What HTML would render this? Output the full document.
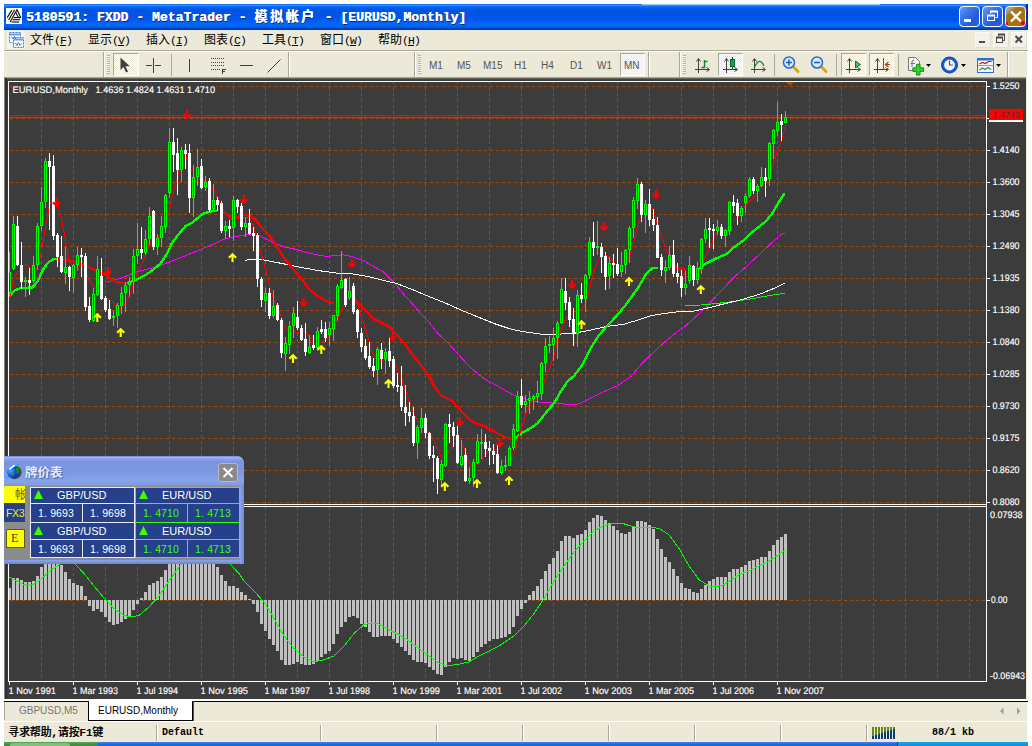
<!DOCTYPE html>
<html lang="zh-CN"><head><meta charset="utf-8"><title>5180591: FXDD - MetaTrader</title>
<style>
html,body{margin:0;padding:0;background:#fff;}
body{width:1032px;height:746px;position:relative;overflow:hidden;font-family:"Liberation Sans","Noto Sans CJK SC",sans-serif;font-size:12px;color:#000;}
div,span{position:absolute;box-sizing:border-box;}
#win{left:4px;top:4px;width:1023px;height:738px;background:#ece9d8;}
#title{left:4px;top:4px;width:1024px;height:26px;background:linear-gradient(to bottom,#0058ee 0%,#3593ff 4%,#288eff 6%,#127dff 8%,#036ffc 10%,#0262ee 14%,#0057e5 20%,#0054e3 24%,#0055eb 56%,#005bf5 66%,#026afe 76%,#0062ef 86%,#0052d6 92%,#0040ab 97%,#003092 100%);}
#title .hl{left:638px;top:0;width:238px;height:1px;background:#9cc3e8;}
#ticon{left:6px;top:8px;width:16px;height:16px;background:#fff;}
#ttext{left:26px;top:9.5px;transform:scaleY(1.02);height:16px;line-height:16px;white-space:pre;color:#fff;font-family:"Liberation Mono","Noto Sans CJK SC",monospace;font-weight:bold;font-size:13px;text-shadow:0.4px 0 0 #fff,1px 1px 0 #0a2a7a;letter-spacing:0.07px;transform-origin:0 50%;}
#ttext .cj{position:static;letter-spacing:2.6px;}
.tbtn{top:6px;width:21px;height:21px;border:1px solid #fff;border-radius:4px;background:linear-gradient(135deg,#6a9cf6 0,#3a74ea 35%,#2458d8 70%,#2a60e0 100%);}
.mi{top:33px;height:16px;line-height:16px;font-size:12px;white-space:pre;font-family:"Liberation Mono","Noto Sans CJK SC",monospace;}
.mi b{position:static;font-weight:normal;font-size:11.5px;letter-spacing:-0.9px;font-family:"Liberation Mono",monospace;}
.mi u{text-decoration:underline;}
.sepd{width:1px;background:#aca899;}
.sepl{width:1px;background:#fff;}
.grip{width:3px;height:19px;top:55px;background:repeating-linear-gradient(to bottom,#b5b2a3 0,#b5b2a3 1px,#f8f7f0 1px,#f8f7f0 2px);}
.sel{top:53px;height:23px;border:1px solid;border-color:#aca899 #fff #fff #aca899;background:repeating-conic-gradient(#ffffff 0% 25%,#ece9d8 0% 50%) 0 0/2px 2px;}
.tf{top:60px;font-size:10px;line-height:12px;height:12px;color:#555;font-family:"Liberation Sans",sans-serif;white-space:pre;}
.st{top:726px;font-size:12px;line-height:14px;height:14px;white-space:pre;font-family:"Liberation Mono","Noto Sans CJK SC",monospace;font-weight:bold;}
svg{position:absolute;overflow:visible;}
.qc{background:#26408b;border:1px solid;}
.wb{border-color:#e6eaff;}
.gb{border-color:#40ff00;}
.qh{font-size:11px;line-height:12px;height:12px;color:#fff;white-space:pre;font-family:"Liberation Sans",sans-serif;}
.qp{font-size:10.5px;line-height:12px;height:12px;color:#fff;white-space:pre;font-family:"Liberation Sans",sans-serif;letter-spacing:0.16px;}
.qp i{font-style:normal;position:static;letter-spacing:3.2px;}
.qp.g{color:#40ff00;}
.mdi{top:32px;width:16px;height:16px;background:#f3f2e9;border:1px solid;border-color:#faf9f3 #e2dfd0 #e2dfd0 #faf9f3;}
.mdi svg{left:-1px !important;top:-1px !important;}

</style></head>
<body>
<div id="win"></div>
<div id="title"><div class="hl"></div></div>
<div id="ticon"><svg width="16" height="16" viewBox="0 0 16 16" style="left:0;top:0"><g stroke="#111" stroke-width="1.15" fill="none"><path d="M1.200 9.600 L5.800 2.100"/><path d="M2.600 12 L8.700 1.800"/><path d="M4.100 14 L11 1.800 L14.500 9"/><path d="M9.600 4.200 L12.300 9.300"/><path d="M7.600 9.600 H15.100"/><path d="M6.700 11.700 H14.300"/><path d="M5.500 14 H13.100"/></g></svg></div>
<div id="ttext">5180591: FXDD - MetaTrader - <span class="cj">模拟帐户</span> - [EURUSD,Monthly]</div>
<div class="tbtn" style="left:959px"><svg width="19" height="19" style="left:0;top:0"><rect x="4" y="12" width="7" height="3" fill="#fff"/></svg></div>
<div class="tbtn" style="left:982px"><svg width="19" height="19" style="left:0;top:0"><g fill="none" stroke="#fff"><path d="M7.500 6.500 V4.500 H14.500 V10.500 H12.500" stroke-width="1"/><path d="M7 4.500 H15" stroke-width="2"/><rect x="4.500" y="8.500" width="7" height="5"/><path d="M4 8.500 H12" stroke-width="2"/></g></svg></div>
<div class="tbtn" style="left:1005px;background:linear-gradient(135deg,#a0a0a0 0,#a0a0a0 14%,#a8740e 30%,#a6700c 100%)"><svg width="19" height="19" style="left:0;top:0"><path d="M5 4.500 L15 14.500 M15 4.500 L5 14.500" stroke="#fff" stroke-width="2.300" fill="none"/><rect x="15" y="14" width="4" height="4" rx="1.500" fill="#f00"/><rect x="0" y="15" width="2" height="3" fill="#f00"/></svg></div>
<div style="left:1026px;top:4px;width:2px;height:26px;background:linear-gradient(to right,#0a34c4,#0a1e9e)"></div>

<!-- menu bar -->
<svg width="18" height="18" style="left:7px;top:31px" viewBox="0 0 18 18"><rect x="0" y="0" width="18" height="18" fill="#f5f4ec"/><g fill="#fff" stroke="#3f78d8" stroke-width="1"><rect x="2.500" y="1.500" width="11" height="10" stroke-dasharray="2 1"/><rect x="6.500" y="6.500" width="10" height="10" stroke-dasharray="2 1"/></g><path d="M3 3.500 H13" stroke="#6a9ae8" stroke-width="2"/><path d="M7 8.500 H16" stroke="#6a9ae8" stroke-width="2"/><path d="M4.500 6 l1.500 2 l1.500 -2.500 l1.500 2.500" stroke="#3f78d8" fill="none" stroke-width="1"/><path d="M8.500 12 l1.500 2.500 l1.500 -3 l1.500 3 l1.500 -2" stroke="#3f78d8" fill="none" stroke-width="1"/></svg>
<div class="mi" style="left:30px">文件<b>(<u>F</u>)</b></div>
<div class="mi" style="left:88px">显示<b>(<u>V</u>)</b></div>
<div class="mi" style="left:146px">插入<b>(<u>I</u>)</b></div>
<div class="mi" style="left:204px">图表<b>(<u>C</u>)</b></div>
<div class="mi" style="left:262px">工具<b>(<u>T</u>)</b></div>
<div class="mi" style="left:320px">窗口<b>(<u>W</u>)</b></div>
<div class="mi" style="left:378px">帮助<b>(<u>H</u>)</b></div>
<!-- mdi buttons -->
<div class="mdi" style="left:975px"><svg width="16" height="16" style="left:0;top:0"><rect x="4" y="9" width="6" height="2" fill="#4a4a4a"/></svg></div>
<div class="mdi" style="left:993px"><svg width="16" height="16" style="left:0;top:0"><g fill="none" stroke="#4a4a4a"><path d="M5.500 4.500 V2.500 H11.500 V8.500 H9.500"/><path d="M5 2.500 H12" stroke-width="2"/><rect x="3.500" y="5.500" width="6" height="5"/><path d="M3 5.500 H10" stroke-width="2"/></g></svg></div>
<div class="mdi" style="left:1011px"><svg width="16" height="16" style="left:0;top:0"><path d="M4.500 4 L11 10.500 M11 4 L4.500 10.500" stroke="#4a4a4a" stroke-width="2" fill="none"/></svg></div>
<div style="left:4px;top:50px;width:1024px;height:1px;background:#aca899"></div>
<div style="left:4px;top:51px;width:1024px;height:1px;background:#fff"></div>

<!-- toolbar 1: line studies -->
<div class="sepd" style="left:103px;top:52px;height:25px"></div><div class="sepl" style="left:104px;top:52px;height:25px"></div>
<div class="grip" style="left:107px"></div>
<div class="sel" style="left:113px;width:26px"></div>
<svg width="190" height="26" style="left:100px;top:51px">
<path d="M20.5 6.5 L20.5 19 L23.5 16 L26 21.5 L28 20.5 L25.5 15.3 L29.8 15.3 Z" fill="#404040"/>
<g stroke="#404040" stroke-width="1" fill="none">
<path d="M53.5 7 V22 M46 14.5 H52 M55 14.5 H61"/>
<path d="M89.5 8 V21"/>
<path d="M111 7.5 H124 M111 11.5 H124 M111 14.5 H124 M111 18.5 H120" stroke-dasharray="1 1"/>
<path d="M140 14.5 H153"/>
<path d="M167.5 21.5 L180.5 8.5"/>
</g>
<path d="M122 18 h4 v1 h-3 v1 h2 v1 h-2 v2 h-1 Z" fill="#404040"/>
</svg>
<div class="sepd" style="left:171px;top:54px;height:22px"></div>
<div class="sepd" style="left:288px;top:52px;height:25px"></div><div class="sepl" style="left:289px;top:52px;height:25px"></div>

<!-- toolbar 2: timeframes -->
<div class="sepd" style="left:414px;top:52px;height:25px"></div><div class="sepl" style="left:415px;top:52px;height:25px"></div>
<div class="grip" style="left:418px"></div>
<div class="tf" style="left:429px">M1</div>
<div class="tf" style="left:457px">M5</div>
<div class="tf" style="left:483px">M15</div>
<div class="tf" style="left:514px">H1</div>
<div class="tf" style="left:541px">H4</div>
<div class="tf" style="left:570px">D1</div>
<div class="tf" style="left:597px">W1</div>
<div class="sel" style="left:620px;width:25px"></div>
<div class="tf" style="left:624px">MN</div>
<div class="sepd" style="left:648px;top:52px;height:25px"></div><div class="sepl" style="left:649px;top:52px;height:25px"></div>

<!-- toolbar 3: charts -->
<div class="sepd" style="left:679px;top:52px;height:25px"></div><div class="sepl" style="left:680px;top:52px;height:25px"></div>
<div class="grip" style="left:683px"></div>
<div class="sel" style="left:718px;width:25px"></div>
<div class="sel" style="left:841px;width:25px"></div>
<div class="sel" style="left:869px;width:25px"></div>
<svg width="340" height="26" style="left:676px;top:51px">
<defs>
<g id="axes" stroke="#404040" stroke-width="1" fill="none"><path d="M3.5 1 V15 M0 11.500 H14"/><path d="M1.5 3.500 L3.500 0.500 L5.500 3.500 M11.500 9.500 L14.500 11.500 L11.500 13.500"/></g>
</defs>
<!-- bar chart -->
<use href="#axes" x="19" y="7"/>
<path d="M28.500 9 V17 M25.500 16.500 H28.500 M28.500 10.500 H31.500" stroke="#0a8a2a" stroke-width="1.400" fill="none"/>
<!-- candle -->
<use href="#axes" x="47" y="7"/>
<path d="M56.500 6 V18" stroke="#063" stroke-width="1"/><rect x="54.500" y="8.500" width="4" height="7" fill="#1aa34a" stroke="#063"/>
<!-- line -->
<use href="#axes" x="75" y="7"/>
<path d="M78 17 C82 9 85 8 88 15" stroke="#0a8a2a" stroke-width="1.300" fill="none"/>
<!-- zoom in -->
<g>
<path d="M117 15.500 L122 20.500" stroke="#d8a818" stroke-width="3" stroke-linecap="round"/>
<circle cx="113" cy="11.500" r="5.500" fill="#d9e8fb" stroke="#2f6fd0" stroke-width="1.600"/>
<path d="M110 11.500 H116 M113 8.500 V14.500" stroke="#1f5fc0" stroke-width="1.600"/>
</g>
<!-- zoom out -->
<g>
<path d="M145 15.500 L150 20.500" stroke="#d8a818" stroke-width="3" stroke-linecap="round"/>
<circle cx="141" cy="11.500" r="5.500" fill="#d9e8fb" stroke="#2f6fd0" stroke-width="1.600"/>
<path d="M138 11.500 H144" stroke="#1f5fc0" stroke-width="1.600"/>
</g>
<!-- autoscroll -->
<use href="#axes" x="170" y="7"/>
<path d="M179.500 10 L184.500 13.500 L179.500 17 Z" fill="#4dbb5a" stroke="#0a7a2a" stroke-width="1"/>
<!-- chart shift -->
<use href="#axes" x="198" y="7"/>
<path d="M207.500 7 V18" stroke="#1f5fc0" stroke-width="1"/><path d="M214 13.500 H210 M212.500 11 L209.500 13.500 L212.500 16" stroke="#a8401a" stroke-width="1.200" fill="none"/>
<!-- indicators -->
<g>
<path d="M232.500 6.500 H239.500 L243.500 10.500 V19.500 H232.500 Z" fill="#f4f4f4" stroke="#777"/>
<path d="M236 16 V11 q0 -2 2 -2 M234.500 12.500 H239" stroke="#777" fill="none"/>
<path d="M240.500 12.500 h4 v4 h4 v4 h-4 v4 h-4 v-4 h-4 v-4 h4 Z" fill="#2fd02f" stroke="#0a8a0a" transform="translate(24 2) scale(0.9)"/>
<path d="M250 13 h5 l-2.500 3 Z" fill="#000"/>
</g>
<!-- clock -->
<g>
<circle cx="273.500" cy="14" r="6.800" fill="#f4f6fa" stroke="#1a5cc8" stroke-width="2.800"/>
<circle cx="273.500" cy="14" r="8" fill="none" stroke="#0c3c9a" stroke-width="0.800"/>
<path d="M273.500 9.500 V14 H277" stroke="#555" stroke-width="1.200" fill="none"/>
<path d="M285 13 h5 l-2.500 3 Z" fill="#000"/>
</g>
<!-- template -->
<g>
<rect x="301.500" y="7.500" width="16" height="14" fill="#f4f4f4" stroke="#2f6fd0"/>
<path d="M301 8.500 H318" stroke="#2f6fd0" stroke-width="2"/>
<path d="M302 14.500 H317" stroke="#7aa0e0" stroke-width="1"/>
<path d="M303.500 13 l3 -1.500 l3 1 l3 -2 l3 0" stroke="#b02a1a" fill="none" stroke-width="1.200"/>
<path d="M303.500 19 l3 -2 l2.500 1.500 l3 -2 l3 2" stroke="#1a9a3a" fill="none" stroke-width="1.200"/>
<path d="M320 13 h5 l-2.500 3 Z" fill="#000"/>
</g>
</svg>
<div class="sepd" style="left:774px;top:54px;height:22px"></div>
<div class="sepd" style="left:836px;top:54px;height:22px"></div>
<div class="sepd" style="left:898px;top:54px;height:22px"></div>
<div class="sepd" style="left:1007px;top:52px;height:25px"></div><div class="sepl" style="left:1008px;top:52px;height:25px"></div>

<svg id="chart" width="1032" height="746" viewBox="0 0 1032 746" style="left:0;top:0" shape-rendering="crispEdges" font-family="Liberation Sans, sans-serif">
<rect x="4" y="77" width="1022" height="622" fill="#3c3c3c"/>
<rect x="4" y="77" width="1022" height="1" fill="#a5a293"/>
<rect x="4" y="78" width="1022" height="1" fill="#68665c"/>
<rect x="4" y="79" width="1022" height="1" fill="#444440"/>
<rect x="4" y="77" width="1" height="622" fill="#8a887d"/>
<rect x="5" y="78" width="2" height="621" fill="#303030"/>
<g stroke="#9a4e12" stroke-width="1" stroke-dasharray="3 3" fill="none">
<path d="M41.5 81 V681"/>
<path d="M73.5 81 V681"/>
<path d="M105.5 81 V681"/>
<path d="M137.5 81 V681"/>
<path d="M169.5 81 V681"/>
<path d="M201.5 81 V681"/>
<path d="M233.5 81 V681"/>
<path d="M265.5 81 V681"/>
<path d="M297.5 81 V681"/>
<path d="M329.5 81 V681"/>
<path d="M361.5 81 V681"/>
<path d="M393.5 81 V681"/>
<path d="M425.5 81 V681"/>
<path d="M457.5 81 V681"/>
<path d="M489.5 81 V681"/>
<path d="M521.5 81 V681"/>
<path d="M553.5 81 V681"/>
<path d="M585.5 81 V681"/>
<path d="M617.5 81 V681"/>
<path d="M649.5 81 V681"/>
<path d="M681.5 81 V681"/>
<path d="M713.5 81 V681"/>
<path d="M745.5 81 V681"/>
<path d="M777.5 81 V681"/>
<path d="M809.5 81 V681"/>
<path d="M841.5 81 V681"/>
<path d="M873.5 81 V681"/>
<path d="M905.5 81 V681"/>
<path d="M937.5 81 V681"/>
<path d="M969.5 81 V681"/>
<path d="M10 86.5 H986"/>
<path d="M10 118.5 H986"/>
<path d="M10 150.5 H986"/>
<path d="M10 182.5 H986"/>
<path d="M10 214.5 H986"/>
<path d="M10 246.5 H986"/>
<path d="M10 278.5 H986"/>
<path d="M10 310.5 H986"/>
<path d="M10 342.5 H986"/>
<path d="M10 374.5 H986"/>
<path d="M10 406.5 H986"/>
<path d="M10 438.5 H986"/>
<path d="M10 470.5 H986"/>
<path d="M10 502.5 H986"/>
<path d="M10 600.5 H986"/>
</g>
<g fill="#fff">
<rect x="8" y="81" width="979" height="1"/>
<rect x="8" y="81" width="1" height="601"/>
<rect x="986" y="81" width="1" height="601"/>
<rect x="8" y="681" width="979" height="1"/>
<rect x="8" y="504" width="979" height="1"/>
<rect x="8" y="506" width="979" height="1"/>
<rect x="9" y="505" width="977" height="1" fill="#3c3c3c"/>
<rect x="987" y="86" width="3" height="1"/>
<rect x="987" y="118" width="3" height="1"/>
<rect x="987" y="150" width="3" height="1"/>
<rect x="987" y="182" width="3" height="1"/>
<rect x="987" y="214" width="3" height="1"/>
<rect x="987" y="246" width="3" height="1"/>
<rect x="987" y="278" width="3" height="1"/>
<rect x="987" y="310" width="3" height="1"/>
<rect x="987" y="342" width="3" height="1"/>
<rect x="987" y="374" width="3" height="1"/>
<rect x="987" y="406" width="3" height="1"/>
<rect x="987" y="438" width="3" height="1"/>
<rect x="987" y="470" width="3" height="1"/>
<rect x="987" y="502" width="3" height="1"/>
<rect x="987" y="600" width="3" height="1"/>
<rect x="9" y="682" width="1" height="3"/>
<rect x="73" y="682" width="1" height="3"/>
<rect x="137" y="682" width="1" height="3"/>
<rect x="201" y="682" width="1" height="3"/>
<rect x="265" y="682" width="1" height="3"/>
<rect x="329" y="682" width="1" height="3"/>
<rect x="393" y="682" width="1" height="3"/>
<rect x="457" y="682" width="1" height="3"/>
<rect x="521" y="682" width="1" height="3"/>
<rect x="585" y="682" width="1" height="3"/>
<rect x="649" y="682" width="1" height="3"/>
<rect x="713" y="682" width="1" height="3"/>
<rect x="777" y="682" width="1" height="3"/>
</g>
<rect x="9" y="117" width="977" height="1" fill="#9a4e12"/>
<rect x="9" y="115" width="977" height="1" fill="#f00"/>
<rect x="9" y="116" width="977" height="1" fill="#f00" opacity="0.25"/>
<g fill="#c0c0c0">
<rect x="9" y="588" width="2" height="12"/>
<rect x="12" y="578" width="3" height="22"/>
<rect x="16" y="578" width="3" height="22"/>
<rect x="20" y="580" width="3" height="20"/>
<rect x="24" y="582" width="3" height="18"/>
<rect x="28" y="582" width="3" height="18"/>
<rect x="32" y="581" width="3" height="19"/>
<rect x="36" y="576" width="3" height="24"/>
<rect x="40" y="567" width="3" height="33"/>
<rect x="44" y="560" width="3" height="40"/>
<rect x="48" y="556" width="3" height="44"/>
<rect x="52" y="555" width="3" height="45"/>
<rect x="56" y="558" width="3" height="42"/>
<rect x="60" y="565" width="3" height="35"/>
<rect x="64" y="572" width="3" height="28"/>
<rect x="68" y="579" width="3" height="21"/>
<rect x="72" y="583" width="3" height="17"/>
<rect x="76" y="585" width="3" height="15"/>
<rect x="80" y="586" width="3" height="14"/>
<rect x="84" y="596" width="3" height="4"/>
<rect x="88" y="600" width="3" height="6"/>
<rect x="92" y="600" width="3" height="11"/>
<rect x="96" y="600" width="3" height="9"/>
<rect x="100" y="600" width="3" height="12"/>
<rect x="104" y="600" width="3" height="17"/>
<rect x="108" y="600" width="3" height="22"/>
<rect x="112" y="600" width="3" height="25"/>
<rect x="116" y="600" width="3" height="24"/>
<rect x="120" y="600" width="3" height="22"/>
<rect x="124" y="600" width="3" height="19"/>
<rect x="128" y="600" width="3" height="16"/>
<rect x="132" y="600" width="3" height="10"/>
<rect x="136" y="600" width="3" height="4"/>
<rect x="140" y="598" width="3" height="2"/>
<rect x="144" y="592" width="3" height="8"/>
<rect x="148" y="585" width="3" height="15"/>
<rect x="152" y="583" width="3" height="17"/>
<rect x="156" y="581" width="3" height="19"/>
<rect x="160" y="577" width="3" height="23"/>
<rect x="164" y="570" width="3" height="30"/>
<rect x="168" y="562" width="3" height="38"/>
<rect x="172" y="555" width="3" height="45"/>
<rect x="176" y="548" width="3" height="52"/>
<rect x="180" y="543" width="3" height="57"/>
<rect x="184" y="540" width="3" height="60"/>
<rect x="188" y="538" width="3" height="62"/>
<rect x="192" y="538" width="3" height="62"/>
<rect x="196" y="540" width="3" height="60"/>
<rect x="200" y="544" width="3" height="56"/>
<rect x="204" y="549" width="3" height="51"/>
<rect x="208" y="555" width="3" height="45"/>
<rect x="212" y="561" width="3" height="39"/>
<rect x="216" y="567" width="3" height="33"/>
<rect x="220" y="575" width="3" height="25"/>
<rect x="224" y="581" width="3" height="19"/>
<rect x="228" y="586" width="3" height="14"/>
<rect x="232" y="586" width="3" height="14"/>
<rect x="236" y="588" width="3" height="12"/>
<rect x="240" y="592" width="3" height="8"/>
<rect x="244" y="595" width="3" height="5"/>
<rect x="248" y="599" width="3" height="1"/>
<rect x="252" y="600" width="3" height="4"/>
<rect x="256" y="600" width="3" height="12"/>
<rect x="260" y="600" width="3" height="24"/>
<rect x="264" y="600" width="3" height="31"/>
<rect x="268" y="600" width="3" height="39"/>
<rect x="272" y="600" width="3" height="45"/>
<rect x="276" y="600" width="3" height="51"/>
<rect x="280" y="600" width="3" height="60"/>
<rect x="284" y="600" width="3" height="65"/>
<rect x="288" y="600" width="3" height="65"/>
<rect x="292" y="600" width="3" height="64"/>
<rect x="296" y="600" width="3" height="62"/>
<rect x="300" y="600" width="3" height="64"/>
<rect x="304" y="600" width="3" height="65"/>
<rect x="308" y="600" width="3" height="65"/>
<rect x="312" y="600" width="3" height="64"/>
<rect x="316" y="600" width="3" height="61"/>
<rect x="320" y="600" width="3" height="57"/>
<rect x="324" y="600" width="3" height="54"/>
<rect x="328" y="600" width="3" height="51"/>
<rect x="332" y="600" width="3" height="44"/>
<rect x="336" y="600" width="3" height="34"/>
<rect x="340" y="600" width="3" height="27"/>
<rect x="344" y="600" width="3" height="22"/>
<rect x="348" y="600" width="3" height="17"/>
<rect x="352" y="600" width="3" height="16"/>
<rect x="356" y="600" width="3" height="18"/>
<rect x="360" y="600" width="3" height="24"/>
<rect x="364" y="600" width="3" height="27"/>
<rect x="368" y="600" width="3" height="32"/>
<rect x="372" y="600" width="3" height="37"/>
<rect x="376" y="600" width="3" height="37"/>
<rect x="380" y="600" width="3" height="36"/>
<rect x="384" y="600" width="3" height="36"/>
<rect x="388" y="600" width="3" height="36"/>
<rect x="392" y="600" width="3" height="39"/>
<rect x="396" y="600" width="3" height="43"/>
<rect x="400" y="600" width="3" height="47"/>
<rect x="404" y="600" width="3" height="51"/>
<rect x="408" y="600" width="3" height="55"/>
<rect x="412" y="600" width="3" height="60"/>
<rect x="416" y="600" width="3" height="62"/>
<rect x="420" y="600" width="3" height="62"/>
<rect x="424" y="600" width="3" height="63"/>
<rect x="428" y="600" width="3" height="67"/>
<rect x="432" y="600" width="3" height="70"/>
<rect x="436" y="600" width="3" height="74"/>
<rect x="440" y="600" width="3" height="75"/>
<rect x="444" y="600" width="3" height="67"/>
<rect x="448" y="600" width="3" height="62"/>
<rect x="452" y="600" width="3" height="58"/>
<rect x="456" y="600" width="3" height="59"/>
<rect x="460" y="600" width="3" height="58"/>
<rect x="464" y="600" width="3" height="60"/>
<rect x="468" y="600" width="3" height="61"/>
<rect x="472" y="600" width="3" height="57"/>
<rect x="476" y="600" width="3" height="52"/>
<rect x="480" y="600" width="3" height="47"/>
<rect x="484" y="600" width="3" height="44"/>
<rect x="488" y="600" width="3" height="41"/>
<rect x="492" y="600" width="3" height="39"/>
<rect x="496" y="600" width="3" height="39"/>
<rect x="500" y="600" width="3" height="38"/>
<rect x="504" y="600" width="3" height="37"/>
<rect x="508" y="600" width="3" height="34"/>
<rect x="512" y="600" width="3" height="27"/>
<rect x="516" y="600" width="3" height="16"/>
<rect x="520" y="600" width="3" height="9"/>
<rect x="524" y="600" width="3" height="3"/>
<rect x="528" y="595" width="3" height="5"/>
<rect x="532" y="591" width="3" height="9"/>
<rect x="536" y="586" width="3" height="14"/>
<rect x="540" y="579" width="3" height="21"/>
<rect x="544" y="571" width="3" height="29"/>
<rect x="548" y="564" width="3" height="36"/>
<rect x="552" y="558" width="3" height="42"/>
<rect x="556" y="551" width="3" height="49"/>
<rect x="560" y="541" width="3" height="59"/>
<rect x="564" y="536" width="3" height="64"/>
<rect x="568" y="536" width="3" height="64"/>
<rect x="572" y="538" width="3" height="62"/>
<rect x="576" y="535" width="3" height="65"/>
<rect x="580" y="534" width="3" height="66"/>
<rect x="584" y="530" width="3" height="70"/>
<rect x="588" y="522" width="3" height="78"/>
<rect x="592" y="518" width="3" height="82"/>
<rect x="596" y="515" width="3" height="85"/>
<rect x="600" y="516" width="3" height="84"/>
<rect x="604" y="520" width="3" height="80"/>
<rect x="608" y="523" width="3" height="77"/>
<rect x="612" y="526" width="3" height="74"/>
<rect x="616" y="530" width="3" height="70"/>
<rect x="620" y="533" width="3" height="67"/>
<rect x="624" y="534" width="3" height="66"/>
<rect x="628" y="532" width="3" height="68"/>
<rect x="632" y="527" width="3" height="73"/>
<rect x="636" y="521" width="3" height="79"/>
<rect x="640" y="521" width="3" height="79"/>
<rect x="644" y="522" width="3" height="78"/>
<rect x="648" y="525" width="3" height="75"/>
<rect x="652" y="529" width="3" height="71"/>
<rect x="656" y="539" width="3" height="61"/>
<rect x="660" y="549" width="3" height="51"/>
<rect x="664" y="557" width="3" height="43"/>
<rect x="668" y="562" width="3" height="38"/>
<rect x="672" y="569" width="3" height="31"/>
<rect x="676" y="576" width="3" height="24"/>
<rect x="680" y="583" width="3" height="17"/>
<rect x="684" y="588" width="3" height="12"/>
<rect x="688" y="589" width="3" height="11"/>
<rect x="692" y="592" width="3" height="8"/>
<rect x="696" y="593" width="3" height="7"/>
<rect x="700" y="589" width="3" height="11"/>
<rect x="704" y="585" width="3" height="15"/>
<rect x="708" y="581" width="3" height="19"/>
<rect x="712" y="579" width="3" height="21"/>
<rect x="716" y="577" width="3" height="23"/>
<rect x="720" y="577" width="3" height="23"/>
<rect x="724" y="577" width="3" height="23"/>
<rect x="728" y="572" width="3" height="28"/>
<rect x="732" y="569" width="3" height="31"/>
<rect x="736" y="569" width="3" height="31"/>
<rect x="740" y="567" width="3" height="33"/>
<rect x="744" y="565" width="3" height="35"/>
<rect x="748" y="561" width="3" height="39"/>
<rect x="752" y="560" width="3" height="40"/>
<rect x="756" y="559" width="3" height="41"/>
<rect x="760" y="557" width="3" height="43"/>
<rect x="764" y="557" width="3" height="43"/>
<rect x="768" y="551" width="3" height="49"/>
<rect x="772" y="545" width="3" height="55"/>
<rect x="776" y="540" width="3" height="60"/>
<rect x="780" y="537" width="3" height="63"/>
<rect x="784" y="534" width="3" height="66"/>
</g>
<polyline fill="none" stroke="#00ff00" stroke-width="1" shape-rendering="crispEdges" points="9.5,577.0 16.5,581.0 26.5,585.5 34.0,584.0 41.5,578.5 51.5,569.7 60.0,564.0 66.0,560.0 72.0,560.0 75.0,564.0 84.0,573.5 94.0,586.0 104.0,598.0 114.0,608.5 124.0,615.5 131.5,617.0 139.0,615.5 149.0,607.0 159.0,596.0 169.0,581.0 179.0,567.0 182.0,564.0 195.0,553.0 210.0,550.0 222.0,556.0 230.0,564.0 239.0,573.5 244.0,581.0 254.0,591.0 264.0,602.0 274.0,618.5 284.0,636.0 294.0,648.5 304.0,657.0 314.0,662.0 324.0,659.7 334.0,656.0 344.0,646.0 354.0,633.5 364.0,624.7 371.5,623.0 379.0,624.0 389.0,629.7 399.0,634.7 409.0,641.0 419.0,648.5 429.0,656.0 439.0,663.0 446.5,665.5 456.5,664.7 469.0,662.0 479.0,656.0 489.0,651.0 499.0,646.0 514.0,636.0 524.0,626.0 534.0,613.5 544.0,598.5 554.0,581.0 564.0,566.0 574.0,552.0 584.0,541.0 594.0,531.0 604.0,525.5 614.0,523.0 621.5,523.0 629.0,525.5 639.0,528.0 649.0,527.0 659.0,528.5 669.0,534.7 679.0,548.5 689.0,566.0 699.0,579.7 709.0,586.0 716.5,586.5 724.0,584.7 731.5,579.7 739.0,574.7 749.0,571.0 759.0,566.0 769.0,561.5 776.5,556.0 784.7,550.5"/>
<polyline fill="none" stroke="#ff00ff" stroke-width="1" shape-rendering="crispEdges" points="105.7,282.5 120.7,278.3 137.3,271.7 154.0,267.5 175.7,259.7 214.0,244.0 224.0,239.2 234.0,236.7 244.0,235.3 252.7,234.0 257.7,234.7 266.0,239.0 276.0,244.0 286.0,247.3 296.0,249.3 306.0,252.3 316.0,254.7 326.0,256.3 336.0,255.7 342.7,254.7 352.7,256.8 362.7,260.2 372.7,266.0 382.7,271.3 389.3,277.7 396.0,285.0 404.3,295.0 412.7,304.2 421.0,314.2 429.3,322.5 437.7,333.3 446.0,340.8 454.3,350.0 462.7,359.2 471.0,368.3 479.3,375.0 487.7,380.8 496.0,385.0 504.3,390.0 511.0,393.7 517.3,396.8 525.7,399.3 534.0,401.0 540.7,402.4 557.3,403.3 574.0,405.0 580.7,403.3 590.7,398.3 604.0,391.7 617.3,385.8 630.7,376.7 640.7,365.0 650.7,355.0 664.0,342.5 677.3,331.7 684.7,326.7 701.3,311.7 718.0,294.2 734.7,276.7 748.0,265.0 759.7,254.2 771.3,243.3 781.3,234.2 784.7,233.3"/>
<polyline fill="none" stroke="#00ff00" stroke-width="1" shape-rendering="crispEdges" points="684.7,305.3 701.3,305.0 718.0,303.3 734.7,301.3 751.3,298.8 768.0,295.8 784.7,293.3"/>
<polyline fill="none" stroke="#ffffff" stroke-width="1" shape-rendering="crispEdges" points="245.2,260.2 257.7,259.0 269.3,261.0 286.0,264.3 302.7,267.7 319.3,270.7 336.0,273.0 352.7,274.0 369.3,276.8 386.0,281.0 396.0,283.3 412.7,289.7 429.3,296.7 446.0,303.3 462.7,310.8 479.3,317.5 496.0,324.2 512.7,329.7 529.3,332.5 541.0,334.2 557.3,334.2 574.0,333.3 590.7,330.0 607.3,326.3 624.0,324.2 640.7,319.2 650.7,315.8 665.7,313.3 682.3,311.3 693.0,311.3 709.7,307.5 726.3,303.3 743.0,299.2 759.7,294.2 776.3,287.5 784.7,283.3"/>
<polyline fill="none" stroke="#00ff00" stroke-width="2.35" stroke-linejoin="round" stroke-linecap="butt" shape-rendering="crispEdges" points="9.5,296.7 14.0,290.8 20.7,288.0 32.3,287.5 37.3,281.7 44.0,268.0 49.0,261.7 54.0,259.0 57.3,259.0"/>
<polyline fill="none" stroke="#ff0000" stroke-width="2.35" stroke-linejoin="round" stroke-linecap="butt" shape-rendering="crispEdges" points="57.3,259.0 60.7,260.0 70.7,260.8 82.3,263.7 90.7,268.3 97.3,270.8 105.7,275.0 110.7,279.0 117.3,282.5 124.8,283.0"/>
<polyline fill="none" stroke="#00ff00" stroke-width="2.35" stroke-linejoin="round" stroke-linecap="butt" shape-rendering="crispEdges" points="127.3,283.0 135.7,280.0 145.7,275.0 154.0,269.0 160.7,263.3 167.3,253.3 171.5,244.0 175.7,238.0 185.7,225.8 192.3,222.5 202.3,214.2 209.0,211.7 217.3,210.8"/>
<polyline fill="none" stroke="#ff0000" stroke-width="2.35" stroke-linejoin="round" stroke-linecap="butt" shape-rendering="crispEdges" points="223.2,211.7 227.3,215.3 237.3,217.2 244.8,214.7 251.5,216.3 257.3,221.7 262.0,228.0 267.7,233.5 276.0,245.2 284.3,258.5 292.7,268.5 302.7,280.2 309.3,289.3 317.7,296.0 326.0,301.0 333.5,303.2"/>
<polyline fill="none" stroke="#ff0000" stroke-width="2.35" stroke-linejoin="round" stroke-linecap="butt" shape-rendering="crispEdges" points="355.2,301.0 362.7,307.6 374.3,319.2 382.7,323.3 389.3,326.7 396.0,333.8 404.3,343.3 412.7,355.0 421.0,365.0 429.3,376.7 434.0,386.0 441.5,395.7 452.3,401.0 459.0,408.5 467.3,417.7 474.0,422.7 484.0,426.0 492.3,430.2 500.7,435.2 506.5,438.0 510.7,438.5"/>
<polyline fill="none" stroke="#00ff00" stroke-width="2.35" stroke-linejoin="round" stroke-linecap="butt" shape-rendering="crispEdges" points="515.7,437.7 522.3,432.7 530.7,428.0 537.3,423.5 544.0,415.2 550.7,406.8 554.0,403.3 560.7,391.7 567.3,381.7 574.0,375.8 582.3,365.0 590.7,348.3 599.0,335.0 607.3,325.8 617.3,315.0 625.7,305.0 632.3,295.8 636.5,290.0 639.7,285.3 646.3,273.7 652.2,268.3 658.0,267.8"/>
<polyline fill="none" stroke="#ff0000" stroke-width="2.35" stroke-linejoin="round" stroke-linecap="butt" shape-rendering="crispEdges" points="675.5,267.0 681.3,268.7 686.3,270.0"/>
<polyline fill="none" stroke="#00ff00" stroke-width="2.35" stroke-linejoin="round" stroke-linecap="butt" shape-rendering="crispEdges" points="698.8,269.3 706.3,263.3 716.3,258.3 726.3,254.2 734.7,246.7 743.0,240.8 749.7,234.2 758.0,227.5 766.3,220.8 773.0,212.5 778.0,203.3 784.7,193.3"/>
<polyline fill="none" stroke="#ff0000" stroke-width="1" shape-rendering="crispEdges" points="9.5,299.4 13.5,280.2 17.5,272.2 21.5,268.6 25.5,264.6 29.5,266.8 33.5,275.0 37.5,267.2 41.5,251.2 45.5,227.4 49.5,204.2 53.5,198.4 57.5,204.6 61.5,218.6 65.5,239.8 69.5,261.8 73.5,267.6 77.5,267.2 81.5,264.2 85.5,272.2 89.5,280.8 93.5,286.6 97.5,289.4 101.5,297.8 105.5,298.4 109.5,298.2 113.5,302.6 117.5,309.8 121.5,308.6 125.5,303.6 129.5,296.2 133.5,284.2 137.5,273.0 141.5,265.0 145.5,255.8 149.5,242.6 153.5,240.8 157.5,238.6 161.5,233.2 165.5,224.4 169.5,209.6 173.5,191.2 177.5,177.6 181.5,162.4 185.5,154.2 189.5,165.4 193.5,169.8 197.5,169.2 201.5,176.8 205.5,182.4 209.5,184.8 213.5,189.4 217.5,197.0 221.5,205.6 225.5,214.4 229.5,218.2 233.5,218.2 237.5,218.6 241.5,217.8 245.5,217.2 249.5,218.2 253.5,225.4 257.5,239.8 261.5,254.4 265.5,268.4 269.5,284.8 273.5,298.8 277.5,307.0 281.5,317.6 285.5,327.6 289.5,329.6 293.5,331.0 297.5,332.6 301.5,330.0 305.5,331.8 309.5,336.0 313.5,343.0 317.5,343.6 321.5,342.0 325.5,339.2 329.5,335.4 333.5,328.8 337.5,319.8 341.5,309.4 345.5,302.8 349.5,295.4 353.5,294.8 357.5,304.0 361.5,317.4 365.5,328.0 369.5,343.2 373.5,355.0 377.5,358.4 381.5,360.8 385.5,359.6 389.5,358.4 393.5,361.4 397.5,369.0 401.5,378.6 405.5,390.8 409.5,401.8 413.5,413.2 417.5,421.2 421.5,423.4 425.5,427.4 429.5,435.4 433.5,438.4 437.5,448.8 441.5,458.0 445.5,456.2 449.5,450.4 453.5,446.0 457.5,442.8 461.5,441.2 465.5,452.6 469.5,462.8 473.5,468.0 477.5,463.6 481.5,460.8 485.5,454.4 489.5,449.0 493.5,447.6 497.5,454.0 501.5,458.8 505.5,462.0 509.5,461.4 513.5,456.2 517.5,440.8 521.5,428.6 525.5,415.8 529.5,405.8 533.5,399.2 537.5,398.6 541.5,390.2 545.5,379.2 549.5,368.4 553.5,356.8 557.5,342.8 561.5,328.0 565.5,319.4 569.5,314.6 573.5,313.6 577.5,308.0 581.5,310.0 585.5,304.4 589.5,288.8 593.5,271.8 597.5,262.0 601.5,253.6 605.5,254.0 609.5,258.2 613.5,261.6 617.5,267.2 621.5,268.8 625.5,263.4 629.5,256.4 633.5,243.4 637.5,225.4 641.5,215.4 645.5,206.2 649.5,204.6 653.5,209.6 657.5,224.4 661.5,235.4 665.5,248.0 669.5,255.0 673.5,264.8 677.5,268.6 681.5,272.2 685.5,275.6 689.5,277.6 693.5,278.8 697.5,277.0 701.5,267.2 705.5,256.2 709.5,249.2 713.5,239.4 717.5,231.2 721.5,230.6 725.5,230.8 729.5,225.2 733.5,220.2 737.5,218.0 741.5,212.4 745.5,205.6 749.5,201.0 753.5,198.0 757.5,192.0 761.5,185.8 765.5,182.8 769.5,175.6 773.5,163.4 777.5,150.6 781.5,140.2 785.5,127.4"/>
<g>
<rect x="9" y="252" width="1" height="45" fill="#00ff00"/>
<rect x="9" y="272" width="2" height="21" fill="#00ff00"/>
<rect x="9" y="273" width="1" height="19" fill="#3c3c3c"/>
<rect x="13" y="216" width="1" height="54" fill="#00ff00"/>
<rect x="12" y="224" width="3" height="45" fill="#00ff00"/>
<rect x="13" y="225" width="1" height="43" fill="#3c3c3c"/>
<rect x="17" y="216" width="1" height="50" fill="#ffffff"/>
<rect x="16" y="226" width="3" height="39" fill="#ffffff"/>
<rect x="21" y="242" width="1" height="47" fill="#ffffff"/>
<rect x="20" y="265" width="3" height="17" fill="#ffffff"/>
<rect x="25" y="277" width="1" height="20" fill="#00ff00"/>
<rect x="24" y="280" width="3" height="2" fill="#00ff00"/>
<rect x="29" y="268" width="1" height="27" fill="#ffffff"/>
<rect x="28" y="280" width="3" height="3" fill="#ffffff"/>
<rect x="33" y="256" width="1" height="27" fill="#00ff00"/>
<rect x="32" y="265" width="3" height="16" fill="#00ff00"/>
<rect x="33" y="266" width="1" height="14" fill="#3c3c3c"/>
<rect x="37" y="223" width="1" height="47" fill="#00ff00"/>
<rect x="36" y="226" width="3" height="39" fill="#00ff00"/>
<rect x="37" y="227" width="1" height="37" fill="#3c3c3c"/>
<rect x="41" y="187" width="1" height="44" fill="#00ff00"/>
<rect x="40" y="202" width="3" height="24" fill="#00ff00"/>
<rect x="41" y="203" width="1" height="22" fill="#3c3c3c"/>
<rect x="45" y="158" width="1" height="50" fill="#00ff00"/>
<rect x="44" y="161" width="3" height="41" fill="#00ff00"/>
<rect x="45" y="162" width="1" height="39" fill="#3c3c3c"/>
<rect x="49" y="153" width="1" height="77" fill="#ffffff"/>
<rect x="48" y="161" width="3" height="6" fill="#ffffff"/>
<rect x="53" y="155" width="1" height="85" fill="#ffffff"/>
<rect x="52" y="166" width="3" height="70" fill="#ffffff"/>
<rect x="57" y="233" width="1" height="34" fill="#ffffff"/>
<rect x="56" y="235" width="3" height="22" fill="#ffffff"/>
<rect x="61" y="236" width="1" height="37" fill="#ffffff"/>
<rect x="60" y="256" width="3" height="16" fill="#ffffff"/>
<rect x="65" y="247" width="1" height="37" fill="#00ff00"/>
<rect x="64" y="267" width="3" height="6" fill="#00ff00"/>
<rect x="65" y="268" width="1" height="4" fill="#3c3c3c"/>
<rect x="69" y="266" width="1" height="25" fill="#ffffff"/>
<rect x="68" y="267" width="3" height="10" fill="#ffffff"/>
<rect x="73" y="264" width="1" height="29" fill="#00ff00"/>
<rect x="72" y="265" width="3" height="13" fill="#00ff00"/>
<rect x="73" y="266" width="1" height="11" fill="#3c3c3c"/>
<rect x="77" y="247" width="1" height="24" fill="#00ff00"/>
<rect x="76" y="255" width="3" height="10" fill="#00ff00"/>
<rect x="77" y="256" width="1" height="8" fill="#3c3c3c"/>
<rect x="81" y="248" width="1" height="29" fill="#ffffff"/>
<rect x="80" y="255" width="3" height="2" fill="#ffffff"/>
<rect x="85" y="253" width="1" height="58" fill="#ffffff"/>
<rect x="84" y="256" width="3" height="51" fill="#ffffff"/>
<rect x="89" y="297" width="1" height="25" fill="#ffffff"/>
<rect x="88" y="306" width="3" height="14" fill="#ffffff"/>
<rect x="93" y="288" width="1" height="34" fill="#00ff00"/>
<rect x="92" y="294" width="3" height="27" fill="#00ff00"/>
<rect x="93" y="295" width="1" height="25" fill="#3c3c3c"/>
<rect x="97" y="256" width="1" height="40" fill="#00ff00"/>
<rect x="96" y="269" width="3" height="26" fill="#00ff00"/>
<rect x="97" y="270" width="1" height="24" fill="#3c3c3c"/>
<rect x="101" y="258" width="1" height="42" fill="#ffffff"/>
<rect x="100" y="276" width="3" height="23" fill="#ffffff"/>
<rect x="105" y="296" width="1" height="16" fill="#ffffff"/>
<rect x="104" y="298" width="3" height="12" fill="#ffffff"/>
<rect x="109" y="300" width="1" height="20" fill="#ffffff"/>
<rect x="108" y="309" width="3" height="10" fill="#ffffff"/>
<rect x="113" y="311" width="1" height="15" fill="#00ff00"/>
<rect x="112" y="316" width="3" height="2" fill="#00ff00"/>
<rect x="117" y="303" width="1" height="25" fill="#00ff00"/>
<rect x="116" y="305" width="3" height="11" fill="#00ff00"/>
<rect x="117" y="306" width="1" height="9" fill="#3c3c3c"/>
<rect x="121" y="287" width="1" height="27" fill="#00ff00"/>
<rect x="120" y="293" width="3" height="13" fill="#00ff00"/>
<rect x="121" y="294" width="1" height="11" fill="#3c3c3c"/>
<rect x="125" y="282" width="1" height="30" fill="#00ff00"/>
<rect x="124" y="285" width="3" height="8" fill="#00ff00"/>
<rect x="125" y="286" width="1" height="6" fill="#3c3c3c"/>
<rect x="129" y="277" width="1" height="20" fill="#00ff00"/>
<rect x="128" y="282" width="3" height="3" fill="#00ff00"/>
<rect x="129" y="283" width="1" height="1" fill="#3c3c3c"/>
<rect x="133" y="249" width="1" height="45" fill="#00ff00"/>
<rect x="132" y="256" width="3" height="26" fill="#00ff00"/>
<rect x="133" y="257" width="1" height="24" fill="#3c3c3c"/>
<rect x="137" y="223" width="1" height="41" fill="#00ff00"/>
<rect x="136" y="249" width="3" height="7" fill="#00ff00"/>
<rect x="137" y="250" width="1" height="5" fill="#3c3c3c"/>
<rect x="141" y="227" width="1" height="32" fill="#ffffff"/>
<rect x="140" y="249" width="3" height="4" fill="#ffffff"/>
<rect x="145" y="230" width="1" height="25" fill="#00ff00"/>
<rect x="144" y="239" width="3" height="14" fill="#00ff00"/>
<rect x="145" y="240" width="1" height="12" fill="#3c3c3c"/>
<rect x="149" y="207" width="1" height="38" fill="#00ff00"/>
<rect x="148" y="216" width="3" height="23" fill="#00ff00"/>
<rect x="149" y="217" width="1" height="21" fill="#3c3c3c"/>
<rect x="153" y="210" width="1" height="40" fill="#ffffff"/>
<rect x="152" y="211" width="3" height="36" fill="#ffffff"/>
<rect x="157" y="234" width="1" height="21" fill="#00ff00"/>
<rect x="156" y="238" width="3" height="9" fill="#00ff00"/>
<rect x="157" y="239" width="1" height="7" fill="#3c3c3c"/>
<rect x="161" y="216" width="1" height="31" fill="#00ff00"/>
<rect x="160" y="226" width="3" height="12" fill="#00ff00"/>
<rect x="161" y="227" width="1" height="10" fill="#3c3c3c"/>
<rect x="165" y="194" width="1" height="39" fill="#00ff00"/>
<rect x="164" y="195" width="3" height="32" fill="#00ff00"/>
<rect x="165" y="196" width="1" height="30" fill="#3c3c3c"/>
<rect x="169" y="128" width="1" height="70" fill="#00ff00"/>
<rect x="168" y="142" width="3" height="51" fill="#00ff00"/>
<rect x="169" y="143" width="1" height="49" fill="#3c3c3c"/>
<rect x="173" y="128" width="1" height="44" fill="#ffffff"/>
<rect x="172" y="142" width="3" height="13" fill="#ffffff"/>
<rect x="177" y="138" width="1" height="57" fill="#ffffff"/>
<rect x="176" y="153" width="3" height="17" fill="#ffffff"/>
<rect x="181" y="147" width="1" height="35" fill="#00ff00"/>
<rect x="180" y="150" width="3" height="20" fill="#00ff00"/>
<rect x="181" y="151" width="1" height="18" fill="#3c3c3c"/>
<rect x="185" y="144" width="1" height="25" fill="#ffffff"/>
<rect x="184" y="150" width="3" height="4" fill="#ffffff"/>
<rect x="189" y="144" width="1" height="69" fill="#ffffff"/>
<rect x="188" y="153" width="3" height="45" fill="#ffffff"/>
<rect x="193" y="165" width="1" height="52" fill="#00ff00"/>
<rect x="192" y="177" width="3" height="21" fill="#00ff00"/>
<rect x="193" y="178" width="1" height="19" fill="#3c3c3c"/>
<rect x="197" y="149" width="1" height="37" fill="#00ff00"/>
<rect x="196" y="167" width="3" height="10" fill="#00ff00"/>
<rect x="197" y="168" width="1" height="8" fill="#3c3c3c"/>
<rect x="201" y="159" width="1" height="30" fill="#ffffff"/>
<rect x="200" y="166" width="3" height="22" fill="#ffffff"/>
<rect x="205" y="176" width="1" height="15" fill="#00ff00"/>
<rect x="204" y="182" width="3" height="5" fill="#00ff00"/>
<rect x="205" y="183" width="1" height="3" fill="#3c3c3c"/>
<rect x="209" y="178" width="1" height="34" fill="#ffffff"/>
<rect x="208" y="181" width="3" height="29" fill="#ffffff"/>
<rect x="213" y="184" width="1" height="27" fill="#00ff00"/>
<rect x="212" y="200" width="3" height="9" fill="#00ff00"/>
<rect x="213" y="201" width="1" height="7" fill="#3c3c3c"/>
<rect x="217" y="197" width="1" height="14" fill="#ffffff"/>
<rect x="216" y="200" width="3" height="5" fill="#ffffff"/>
<rect x="221" y="201" width="1" height="32" fill="#ffffff"/>
<rect x="220" y="203" width="3" height="28" fill="#ffffff"/>
<rect x="225" y="221" width="1" height="18" fill="#00ff00"/>
<rect x="224" y="226" width="3" height="5" fill="#00ff00"/>
<rect x="225" y="227" width="1" height="3" fill="#3c3c3c"/>
<rect x="229" y="220" width="1" height="17" fill="#ffffff"/>
<rect x="228" y="226" width="3" height="3" fill="#ffffff"/>
<rect x="233" y="196" width="1" height="45" fill="#00ff00"/>
<rect x="232" y="200" width="3" height="28" fill="#00ff00"/>
<rect x="233" y="201" width="1" height="26" fill="#3c3c3c"/>
<rect x="237" y="199" width="1" height="14" fill="#ffffff"/>
<rect x="236" y="200" width="3" height="7" fill="#ffffff"/>
<rect x="241" y="203" width="1" height="27" fill="#ffffff"/>
<rect x="240" y="206" width="3" height="21" fill="#ffffff"/>
<rect x="245" y="217" width="1" height="20" fill="#00ff00"/>
<rect x="244" y="223" width="3" height="4" fill="#00ff00"/>
<rect x="245" y="224" width="1" height="2" fill="#3c3c3c"/>
<rect x="249" y="209" width="1" height="26" fill="#ffffff"/>
<rect x="248" y="223" width="3" height="11" fill="#ffffff"/>
<rect x="253" y="227" width="1" height="24" fill="#ffffff"/>
<rect x="252" y="233" width="3" height="3" fill="#ffffff"/>
<rect x="257" y="233" width="1" height="54" fill="#ffffff"/>
<rect x="256" y="235" width="3" height="44" fill="#ffffff"/>
<rect x="261" y="277" width="1" height="30" fill="#ffffff"/>
<rect x="260" y="279" width="3" height="21" fill="#ffffff"/>
<rect x="265" y="288" width="1" height="24" fill="#00ff00"/>
<rect x="264" y="293" width="3" height="8" fill="#00ff00"/>
<rect x="265" y="294" width="1" height="6" fill="#3c3c3c"/>
<rect x="269" y="288" width="1" height="31" fill="#ffffff"/>
<rect x="268" y="293" width="3" height="23" fill="#ffffff"/>
<rect x="273" y="290" width="1" height="28" fill="#00ff00"/>
<rect x="272" y="306" width="3" height="10" fill="#00ff00"/>
<rect x="273" y="307" width="1" height="8" fill="#3c3c3c"/>
<rect x="277" y="303" width="1" height="18" fill="#ffffff"/>
<rect x="276" y="305" width="3" height="15" fill="#ffffff"/>
<rect x="281" y="318" width="1" height="40" fill="#ffffff"/>
<rect x="280" y="320" width="3" height="33" fill="#ffffff"/>
<rect x="285" y="337" width="1" height="34" fill="#00ff00"/>
<rect x="284" y="343" width="3" height="11" fill="#00ff00"/>
<rect x="285" y="344" width="1" height="9" fill="#3c3c3c"/>
<rect x="289" y="321" width="1" height="33" fill="#00ff00"/>
<rect x="288" y="326" width="3" height="19" fill="#00ff00"/>
<rect x="289" y="327" width="1" height="17" fill="#3c3c3c"/>
<rect x="293" y="307" width="1" height="31" fill="#00ff00"/>
<rect x="292" y="313" width="3" height="13" fill="#00ff00"/>
<rect x="293" y="314" width="1" height="11" fill="#3c3c3c"/>
<rect x="297" y="301" width="1" height="29" fill="#ffffff"/>
<rect x="296" y="317" width="3" height="11" fill="#ffffff"/>
<rect x="301" y="325" width="1" height="16" fill="#ffffff"/>
<rect x="300" y="328" width="3" height="12" fill="#ffffff"/>
<rect x="305" y="323" width="1" height="33" fill="#ffffff"/>
<rect x="304" y="339" width="3" height="13" fill="#ffffff"/>
<rect x="309" y="335" width="1" height="19" fill="#00ff00"/>
<rect x="308" y="347" width="3" height="6" fill="#00ff00"/>
<rect x="309" y="348" width="1" height="4" fill="#3c3c3c"/>
<rect x="313" y="335" width="1" height="15" fill="#ffffff"/>
<rect x="312" y="345" width="3" height="3" fill="#ffffff"/>
<rect x="317" y="327" width="1" height="24" fill="#00ff00"/>
<rect x="316" y="331" width="3" height="17" fill="#00ff00"/>
<rect x="317" y="332" width="1" height="15" fill="#3c3c3c"/>
<rect x="321" y="320" width="1" height="14" fill="#ffffff"/>
<rect x="320" y="329" width="3" height="3" fill="#ffffff"/>
<rect x="325" y="322" width="1" height="20" fill="#ffffff"/>
<rect x="324" y="329" width="3" height="9" fill="#ffffff"/>
<rect x="329" y="322" width="1" height="24" fill="#00ff00"/>
<rect x="328" y="328" width="3" height="7" fill="#00ff00"/>
<rect x="329" y="329" width="1" height="5" fill="#3c3c3c"/>
<rect x="333" y="315" width="1" height="26" fill="#00ff00"/>
<rect x="332" y="315" width="3" height="14" fill="#00ff00"/>
<rect x="333" y="316" width="1" height="12" fill="#3c3c3c"/>
<rect x="337" y="284" width="1" height="37" fill="#00ff00"/>
<rect x="336" y="286" width="3" height="30" fill="#00ff00"/>
<rect x="337" y="287" width="1" height="28" fill="#3c3c3c"/>
<rect x="341" y="251" width="1" height="38" fill="#00ff00"/>
<rect x="340" y="280" width="3" height="8" fill="#00ff00"/>
<rect x="341" y="281" width="1" height="6" fill="#3c3c3c"/>
<rect x="345" y="278" width="1" height="29" fill="#ffffff"/>
<rect x="344" y="279" width="3" height="26" fill="#ffffff"/>
<rect x="349" y="277" width="1" height="23" fill="#00ff00"/>
<rect x="348" y="291" width="3" height="7" fill="#00ff00"/>
<rect x="349" y="292" width="1" height="5" fill="#3c3c3c"/>
<rect x="353" y="283" width="1" height="31" fill="#ffffff"/>
<rect x="352" y="286" width="3" height="26" fill="#ffffff"/>
<rect x="357" y="309" width="1" height="29" fill="#ffffff"/>
<rect x="356" y="310" width="3" height="22" fill="#ffffff"/>
<rect x="361" y="328" width="1" height="24" fill="#ffffff"/>
<rect x="360" y="333" width="3" height="14" fill="#ffffff"/>
<rect x="365" y="339" width="1" height="21" fill="#ffffff"/>
<rect x="364" y="346" width="3" height="12" fill="#ffffff"/>
<rect x="369" y="342" width="1" height="27" fill="#ffffff"/>
<rect x="368" y="356" width="3" height="11" fill="#ffffff"/>
<rect x="373" y="358" width="1" height="19" fill="#ffffff"/>
<rect x="372" y="366" width="3" height="5" fill="#ffffff"/>
<rect x="377" y="347" width="1" height="38" fill="#00ff00"/>
<rect x="376" y="349" width="3" height="21" fill="#00ff00"/>
<rect x="377" y="350" width="1" height="19" fill="#3c3c3c"/>
<rect x="381" y="343" width="1" height="26" fill="#ffffff"/>
<rect x="380" y="350" width="3" height="9" fill="#ffffff"/>
<rect x="385" y="348" width="1" height="26" fill="#00ff00"/>
<rect x="384" y="352" width="3" height="7" fill="#00ff00"/>
<rect x="385" y="353" width="1" height="5" fill="#3c3c3c"/>
<rect x="389" y="337" width="1" height="30" fill="#ffffff"/>
<rect x="388" y="351" width="3" height="10" fill="#ffffff"/>
<rect x="393" y="356" width="1" height="32" fill="#ffffff"/>
<rect x="392" y="359" width="3" height="27" fill="#ffffff"/>
<rect x="397" y="373" width="1" height="19" fill="#ffffff"/>
<rect x="396" y="385" width="3" height="2" fill="#ffffff"/>
<rect x="401" y="366" width="1" height="45" fill="#ffffff"/>
<rect x="400" y="386" width="3" height="21" fill="#ffffff"/>
<rect x="405" y="385" width="1" height="41" fill="#ffffff"/>
<rect x="404" y="407" width="3" height="6" fill="#ffffff"/>
<rect x="409" y="402" width="1" height="20" fill="#ffffff"/>
<rect x="408" y="412" width="3" height="4" fill="#ffffff"/>
<rect x="413" y="407" width="1" height="39" fill="#ffffff"/>
<rect x="412" y="416" width="3" height="27" fill="#ffffff"/>
<rect x="417" y="425" width="1" height="34" fill="#00ff00"/>
<rect x="416" y="427" width="3" height="16" fill="#00ff00"/>
<rect x="417" y="428" width="1" height="14" fill="#3c3c3c"/>
<rect x="421" y="408" width="1" height="25" fill="#00ff00"/>
<rect x="420" y="418" width="3" height="10" fill="#00ff00"/>
<rect x="421" y="419" width="1" height="8" fill="#3c3c3c"/>
<rect x="425" y="414" width="1" height="24" fill="#ffffff"/>
<rect x="424" y="418" width="3" height="15" fill="#ffffff"/>
<rect x="429" y="432" width="1" height="27" fill="#ffffff"/>
<rect x="428" y="433" width="3" height="23" fill="#ffffff"/>
<rect x="433" y="446" width="1" height="36" fill="#ffffff"/>
<rect x="432" y="455" width="3" height="3" fill="#ffffff"/>
<rect x="437" y="456" width="1" height="38" fill="#ffffff"/>
<rect x="436" y="458" width="3" height="21" fill="#ffffff"/>
<rect x="441" y="460" width="1" height="27" fill="#00ff00"/>
<rect x="440" y="464" width="3" height="16" fill="#00ff00"/>
<rect x="441" y="465" width="1" height="14" fill="#3c3c3c"/>
<rect x="445" y="423" width="1" height="44" fill="#00ff00"/>
<rect x="444" y="424" width="3" height="42" fill="#00ff00"/>
<rect x="445" y="425" width="1" height="40" fill="#3c3c3c"/>
<rect x="449" y="414" width="1" height="29" fill="#ffffff"/>
<rect x="448" y="424" width="3" height="3" fill="#ffffff"/>
<rect x="453" y="422" width="1" height="25" fill="#ffffff"/>
<rect x="452" y="427" width="3" height="9" fill="#ffffff"/>
<rect x="457" y="426" width="1" height="38" fill="#ffffff"/>
<rect x="456" y="435" width="3" height="28" fill="#ffffff"/>
<rect x="461" y="440" width="1" height="27" fill="#00ff00"/>
<rect x="460" y="456" width="3" height="9" fill="#00ff00"/>
<rect x="461" y="457" width="1" height="7" fill="#3c3c3c"/>
<rect x="465" y="448" width="1" height="34" fill="#ffffff"/>
<rect x="464" y="455" width="3" height="26" fill="#ffffff"/>
<rect x="469" y="467" width="1" height="17" fill="#00ff00"/>
<rect x="468" y="478" width="3" height="3" fill="#00ff00"/>
<rect x="469" y="479" width="1" height="1" fill="#3c3c3c"/>
<rect x="473" y="459" width="1" height="28" fill="#00ff00"/>
<rect x="472" y="462" width="3" height="16" fill="#00ff00"/>
<rect x="473" y="463" width="1" height="14" fill="#3c3c3c"/>
<rect x="477" y="434" width="1" height="30" fill="#00ff00"/>
<rect x="476" y="441" width="3" height="22" fill="#00ff00"/>
<rect x="477" y="442" width="1" height="20" fill="#3c3c3c"/>
<rect x="481" y="429" width="1" height="30" fill="#00ff00"/>
<rect x="480" y="442" width="3" height="2" fill="#00ff00"/>
<rect x="485" y="434" width="1" height="23" fill="#ffffff"/>
<rect x="484" y="442" width="3" height="7" fill="#ffffff"/>
<rect x="489" y="441" width="1" height="24" fill="#ffffff"/>
<rect x="488" y="448" width="3" height="3" fill="#ffffff"/>
<rect x="493" y="444" width="1" height="20" fill="#ffffff"/>
<rect x="492" y="451" width="3" height="4" fill="#ffffff"/>
<rect x="497" y="445" width="1" height="29" fill="#ffffff"/>
<rect x="496" y="454" width="3" height="19" fill="#ffffff"/>
<rect x="501" y="460" width="1" height="15" fill="#00ff00"/>
<rect x="500" y="466" width="3" height="7" fill="#00ff00"/>
<rect x="501" y="467" width="1" height="5" fill="#3c3c3c"/>
<rect x="505" y="456" width="1" height="15" fill="#00ff00"/>
<rect x="504" y="465" width="3" height="2" fill="#00ff00"/>
<rect x="509" y="446" width="1" height="20" fill="#00ff00"/>
<rect x="508" y="448" width="3" height="18" fill="#00ff00"/>
<rect x="509" y="449" width="1" height="16" fill="#3c3c3c"/>
<rect x="513" y="424" width="1" height="26" fill="#00ff00"/>
<rect x="512" y="429" width="3" height="19" fill="#00ff00"/>
<rect x="513" y="430" width="1" height="17" fill="#3c3c3c"/>
<rect x="517" y="391" width="1" height="41" fill="#00ff00"/>
<rect x="516" y="396" width="3" height="35" fill="#00ff00"/>
<rect x="517" y="397" width="1" height="33" fill="#3c3c3c"/>
<rect x="521" y="379" width="1" height="29" fill="#ffffff"/>
<rect x="520" y="396" width="3" height="9" fill="#ffffff"/>
<rect x="525" y="395" width="1" height="18" fill="#00ff00"/>
<rect x="524" y="401" width="3" height="4" fill="#00ff00"/>
<rect x="525" y="402" width="1" height="2" fill="#3c3c3c"/>
<rect x="529" y="391" width="1" height="23" fill="#00ff00"/>
<rect x="528" y="398" width="3" height="3" fill="#00ff00"/>
<rect x="529" y="399" width="1" height="1" fill="#3c3c3c"/>
<rect x="533" y="395" width="1" height="15" fill="#00ff00"/>
<rect x="532" y="396" width="3" height="3" fill="#00ff00"/>
<rect x="533" y="397" width="1" height="1" fill="#3c3c3c"/>
<rect x="537" y="381" width="1" height="22" fill="#00ff00"/>
<rect x="536" y="393" width="3" height="4" fill="#00ff00"/>
<rect x="537" y="394" width="1" height="2" fill="#3c3c3c"/>
<rect x="541" y="362" width="1" height="38" fill="#00ff00"/>
<rect x="540" y="363" width="3" height="31" fill="#00ff00"/>
<rect x="541" y="364" width="1" height="29" fill="#3c3c3c"/>
<rect x="545" y="338" width="1" height="34" fill="#00ff00"/>
<rect x="544" y="346" width="3" height="17" fill="#00ff00"/>
<rect x="545" y="347" width="1" height="15" fill="#3c3c3c"/>
<rect x="549" y="336" width="1" height="17" fill="#00ff00"/>
<rect x="548" y="344" width="3" height="2" fill="#00ff00"/>
<rect x="553" y="328" width="1" height="33" fill="#00ff00"/>
<rect x="552" y="338" width="3" height="7" fill="#00ff00"/>
<rect x="553" y="339" width="1" height="5" fill="#3c3c3c"/>
<rect x="557" y="321" width="1" height="38" fill="#00ff00"/>
<rect x="556" y="323" width="3" height="15" fill="#00ff00"/>
<rect x="557" y="324" width="1" height="13" fill="#3c3c3c"/>
<rect x="561" y="278" width="1" height="46" fill="#00ff00"/>
<rect x="560" y="289" width="3" height="34" fill="#00ff00"/>
<rect x="561" y="290" width="1" height="32" fill="#3c3c3c"/>
<rect x="565" y="278" width="1" height="32" fill="#ffffff"/>
<rect x="564" y="291" width="3" height="12" fill="#ffffff"/>
<rect x="569" y="297" width="1" height="30" fill="#ffffff"/>
<rect x="568" y="302" width="3" height="18" fill="#ffffff"/>
<rect x="573" y="308" width="1" height="38" fill="#ffffff"/>
<rect x="572" y="319" width="3" height="14" fill="#ffffff"/>
<rect x="577" y="290" width="1" height="57" fill="#00ff00"/>
<rect x="576" y="295" width="3" height="39" fill="#00ff00"/>
<rect x="577" y="296" width="1" height="37" fill="#3c3c3c"/>
<rect x="581" y="283" width="1" height="20" fill="#ffffff"/>
<rect x="580" y="295" width="3" height="4" fill="#ffffff"/>
<rect x="585" y="274" width="1" height="38" fill="#00ff00"/>
<rect x="584" y="275" width="3" height="24" fill="#00ff00"/>
<rect x="585" y="276" width="1" height="22" fill="#3c3c3c"/>
<rect x="589" y="237" width="1" height="42" fill="#00ff00"/>
<rect x="588" y="242" width="3" height="33" fill="#00ff00"/>
<rect x="589" y="243" width="1" height="31" fill="#3c3c3c"/>
<rect x="593" y="222" width="1" height="34" fill="#ffffff"/>
<rect x="592" y="242" width="3" height="6" fill="#ffffff"/>
<rect x="597" y="221" width="1" height="34" fill="#00ff00"/>
<rect x="596" y="246" width="3" height="2" fill="#00ff00"/>
<rect x="601" y="243" width="1" height="30" fill="#ffffff"/>
<rect x="600" y="247" width="3" height="10" fill="#ffffff"/>
<rect x="605" y="252" width="1" height="38" fill="#ffffff"/>
<rect x="604" y="256" width="3" height="21" fill="#ffffff"/>
<rect x="609" y="257" width="1" height="32" fill="#00ff00"/>
<rect x="608" y="263" width="3" height="13" fill="#00ff00"/>
<rect x="609" y="264" width="1" height="11" fill="#3c3c3c"/>
<rect x="613" y="254" width="1" height="24" fill="#ffffff"/>
<rect x="612" y="263" width="3" height="2" fill="#ffffff"/>
<rect x="617" y="248" width="1" height="28" fill="#ffffff"/>
<rect x="616" y="264" width="3" height="10" fill="#ffffff"/>
<rect x="621" y="252" width="1" height="25" fill="#00ff00"/>
<rect x="620" y="265" width="3" height="7" fill="#00ff00"/>
<rect x="621" y="266" width="1" height="5" fill="#3c3c3c"/>
<rect x="625" y="249" width="1" height="25" fill="#00ff00"/>
<rect x="624" y="250" width="3" height="15" fill="#00ff00"/>
<rect x="625" y="251" width="1" height="13" fill="#3c3c3c"/>
<rect x="629" y="226" width="1" height="37" fill="#00ff00"/>
<rect x="628" y="228" width="3" height="22" fill="#00ff00"/>
<rect x="629" y="229" width="1" height="20" fill="#3c3c3c"/>
<rect x="633" y="197" width="1" height="41" fill="#00ff00"/>
<rect x="632" y="200" width="3" height="28" fill="#00ff00"/>
<rect x="633" y="201" width="1" height="26" fill="#3c3c3c"/>
<rect x="637" y="178" width="1" height="31" fill="#00ff00"/>
<rect x="636" y="184" width="3" height="17" fill="#00ff00"/>
<rect x="637" y="185" width="1" height="15" fill="#3c3c3c"/>
<rect x="641" y="182" width="1" height="40" fill="#ffffff"/>
<rect x="640" y="184" width="3" height="31" fill="#ffffff"/>
<rect x="645" y="200" width="1" height="33" fill="#00ff00"/>
<rect x="644" y="204" width="3" height="11" fill="#00ff00"/>
<rect x="645" y="205" width="1" height="9" fill="#3c3c3c"/>
<rect x="649" y="189" width="1" height="37" fill="#ffffff"/>
<rect x="648" y="204" width="3" height="16" fill="#ffffff"/>
<rect x="653" y="209" width="1" height="22" fill="#ffffff"/>
<rect x="652" y="219" width="3" height="6" fill="#ffffff"/>
<rect x="657" y="217" width="1" height="41" fill="#ffffff"/>
<rect x="656" y="225" width="3" height="33" fill="#ffffff"/>
<rect x="661" y="254" width="1" height="22" fill="#ffffff"/>
<rect x="660" y="257" width="3" height="13" fill="#ffffff"/>
<rect x="665" y="260" width="1" height="23" fill="#00ff00"/>
<rect x="664" y="267" width="3" height="4" fill="#00ff00"/>
<rect x="665" y="268" width="1" height="2" fill="#3c3c3c"/>
<rect x="669" y="246" width="1" height="24" fill="#00ff00"/>
<rect x="668" y="255" width="3" height="13" fill="#00ff00"/>
<rect x="669" y="256" width="1" height="11" fill="#3c3c3c"/>
<rect x="673" y="240" width="1" height="37" fill="#ffffff"/>
<rect x="672" y="255" width="3" height="19" fill="#ffffff"/>
<rect x="677" y="263" width="1" height="20" fill="#ffffff"/>
<rect x="676" y="273" width="3" height="4" fill="#ffffff"/>
<rect x="681" y="270" width="1" height="27" fill="#ffffff"/>
<rect x="680" y="276" width="3" height="12" fill="#ffffff"/>
<rect x="685" y="271" width="1" height="24" fill="#00ff00"/>
<rect x="684" y="284" width="3" height="4" fill="#00ff00"/>
<rect x="685" y="285" width="1" height="2" fill="#3c3c3c"/>
<rect x="689" y="256" width="1" height="28" fill="#00ff00"/>
<rect x="688" y="265" width="3" height="16" fill="#00ff00"/>
<rect x="689" y="266" width="1" height="14" fill="#3c3c3c"/>
<rect x="693" y="265" width="1" height="21" fill="#ffffff"/>
<rect x="692" y="266" width="3" height="14" fill="#ffffff"/>
<rect x="697" y="262" width="1" height="22" fill="#00ff00"/>
<rect x="696" y="268" width="3" height="12" fill="#00ff00"/>
<rect x="697" y="269" width="1" height="10" fill="#3c3c3c"/>
<rect x="701" y="238" width="1" height="36" fill="#00ff00"/>
<rect x="700" y="239" width="3" height="30" fill="#00ff00"/>
<rect x="701" y="240" width="1" height="28" fill="#3c3c3c"/>
<rect x="705" y="218" width="1" height="25" fill="#00ff00"/>
<rect x="704" y="229" width="3" height="10" fill="#00ff00"/>
<rect x="705" y="230" width="1" height="8" fill="#3c3c3c"/>
<rect x="709" y="218" width="1" height="30" fill="#ffffff"/>
<rect x="708" y="228" width="3" height="2" fill="#ffffff"/>
<rect x="713" y="224" width="1" height="25" fill="#ffffff"/>
<rect x="712" y="229" width="3" height="2" fill="#ffffff"/>
<rect x="717" y="220" width="1" height="15" fill="#00ff00"/>
<rect x="716" y="227" width="3" height="4" fill="#00ff00"/>
<rect x="717" y="228" width="1" height="2" fill="#3c3c3c"/>
<rect x="721" y="224" width="1" height="15" fill="#ffffff"/>
<rect x="720" y="227" width="3" height="9" fill="#ffffff"/>
<rect x="725" y="229" width="1" height="18" fill="#00ff00"/>
<rect x="724" y="230" width="3" height="6" fill="#00ff00"/>
<rect x="725" y="231" width="1" height="4" fill="#3c3c3c"/>
<rect x="729" y="201" width="1" height="34" fill="#00ff00"/>
<rect x="728" y="202" width="3" height="29" fill="#00ff00"/>
<rect x="729" y="203" width="1" height="27" fill="#3c3c3c"/>
<rect x="733" y="195" width="1" height="18" fill="#ffffff"/>
<rect x="732" y="202" width="3" height="4" fill="#ffffff"/>
<rect x="737" y="199" width="1" height="26" fill="#ffffff"/>
<rect x="736" y="203" width="3" height="13" fill="#ffffff"/>
<rect x="741" y="206" width="1" height="16" fill="#00ff00"/>
<rect x="740" y="208" width="3" height="8" fill="#00ff00"/>
<rect x="741" y="209" width="1" height="6" fill="#3c3c3c"/>
<rect x="745" y="193" width="1" height="20" fill="#00ff00"/>
<rect x="744" y="196" width="3" height="7" fill="#00ff00"/>
<rect x="745" y="197" width="1" height="5" fill="#3c3c3c"/>
<rect x="749" y="177" width="1" height="21" fill="#00ff00"/>
<rect x="748" y="179" width="3" height="17" fill="#00ff00"/>
<rect x="749" y="180" width="1" height="15" fill="#3c3c3c"/>
<rect x="753" y="177" width="1" height="17" fill="#ffffff"/>
<rect x="752" y="179" width="3" height="12" fill="#ffffff"/>
<rect x="757" y="184" width="1" height="18" fill="#00ff00"/>
<rect x="756" y="186" width="3" height="5" fill="#00ff00"/>
<rect x="757" y="187" width="1" height="3" fill="#3c3c3c"/>
<rect x="761" y="167" width="1" height="20" fill="#00ff00"/>
<rect x="760" y="177" width="3" height="9" fill="#00ff00"/>
<rect x="761" y="178" width="1" height="7" fill="#3c3c3c"/>
<rect x="765" y="168" width="1" height="29" fill="#ffffff"/>
<rect x="764" y="177" width="3" height="4" fill="#ffffff"/>
<rect x="769" y="142" width="1" height="44" fill="#00ff00"/>
<rect x="768" y="143" width="3" height="36" fill="#00ff00"/>
<rect x="769" y="144" width="1" height="34" fill="#3c3c3c"/>
<rect x="773" y="129" width="1" height="30" fill="#00ff00"/>
<rect x="772" y="130" width="3" height="14" fill="#00ff00"/>
<rect x="773" y="131" width="1" height="12" fill="#3c3c3c"/>
<rect x="777" y="102" width="1" height="34" fill="#00ff00"/>
<rect x="776" y="122" width="3" height="9" fill="#00ff00"/>
<rect x="777" y="123" width="1" height="7" fill="#3c3c3c"/>
<rect x="781" y="114" width="1" height="27" fill="#ffffff"/>
<rect x="780" y="121" width="3" height="4" fill="#ffffff"/>
<rect x="785" y="111" width="1" height="12" fill="#00ff00"/>
<rect x="784" y="117" width="3" height="6" fill="#00ff00"/>
<rect x="785" y="118" width="1" height="4" fill="#3c3c3c"/>
</g>
<g fill="none" stroke-width="2.1" shape-rendering="auto" stroke-linecap="butt">
<path stroke="#ff0000" d="M187 110 V117.5 M183.4 114.2 L187 117.8 L190.6 114.2"/>
<path stroke="#ff0000" d="M56.5 198 V205.5 M52.9 202.2 L56.5 205.8 L60.1 202.2"/>
<path stroke="#ff0000" d="M108 267 V274.5 M104.4 271.2 L108 274.8 L111.6 271.2"/>
<path stroke="#ff0000" d="M244 195 V202.5 M240.4 199.2 L244 202.8 L247.6 199.2"/>
<path stroke="#ff0000" d="M303.5 298 V305.5 M299.9 302.2 L303.5 305.8 L307.1 302.2"/>
<path stroke="#ff0000" d="M351.8 259 V266.5 M348.2 263.2 L351.8 266.8 L355.40000000000003 263.2"/>
<path stroke="#ff0000" d="M392.7 332 V339.5 M389.09999999999997 336.2 L392.7 339.8 L396.3 336.2"/>
<path stroke="#ff0000" d="M459.8 417.5 V425.0 M456.2 421.7 L459.8 425.3 L463.40000000000003 421.7"/>
<path stroke="#ff0000" d="M499.8 438.5 V446.0 M496.2 442.7 L499.8 446.3 L503.40000000000003 442.7"/>
<path stroke="#ff0000" d="M572 280 V287.5 M568.4 284.2 L572 287.8 L575.6 284.2"/>
<path stroke="#ff0000" d="M603.8 222 V229.5 M600.1999999999999 226.2 L603.8 229.8 L607.4 226.2"/>
<path stroke="#ff0000" d="M656 190 V197.5 M652.4 194.2 L656 197.8 L659.6 194.2"/>
<path stroke="#ffff00" d="M97.3 322 V314.5 M93.7 317.8 L97.3 314.2 L100.89999999999999 317.8"/>
<path stroke="#ffff00" d="M120.7 337 V329.5 M117.10000000000001 332.8 L120.7 329.2 L124.3 332.8"/>
<path stroke="#ffff00" d="M232.5 262 V254.5 M228.9 257.8 L232.5 254.2 L236.1 257.8"/>
<path stroke="#ffff00" d="M293 363 V355.5 M289.4 358.8 L293 355.2 L296.6 358.8"/>
<path stroke="#ffff00" d="M321.3 354 V346.5 M317.7 349.8 L321.3 346.2 L324.90000000000003 349.8"/>
<path stroke="#ffff00" d="M388.5 388 V380.5 M384.9 383.8 L388.5 380.2 L392.1 383.8"/>
<path stroke="#ffff00" d="M444.8 491 V483.5 M441.2 486.8 L444.8 483.2 L448.40000000000003 486.8"/>
<path stroke="#ffff00" d="M477 488 V480.5 M473.4 483.8 L477 480.2 L480.6 483.8"/>
<path stroke="#ffff00" d="M509 485 V477.5 M505.4 480.8 L509 477.2 L512.6 480.8"/>
<path stroke="#ffff00" d="M581.5 329 V321.5 M577.9 324.8 L581.5 321.2 L585.1 324.8"/>
<path stroke="#ffff00" d="M629 286 V278.5 M625.4 281.8 L629 278.2 L632.6 281.8"/>
<path stroke="#ffff00" d="M700.8 294 V286.5 M697.1999999999999 289.8 L700.8 286.2 L704.4 289.8"/>
</g>
<path d="M786 82 H794 L790 86 Z" fill="#9a4e12" shape-rendering="auto"/>
<g fill="#fff" stroke="#fff" stroke-width="0.15" font-size="9.6px" shape-rendering="auto" text-rendering="geometricPrecision">
<rect x="12" y="84" width="204" height="11" fill="#3c3c3c" stroke="none"/>
<text x="12.500" y="93" textLength="75.500" lengthAdjust="spacingAndGlyphs">EURUSD,Monthly</text>
<text x="95.500" y="93" textLength="119.500" lengthAdjust="spacingAndGlyphs">1.4636 1.4824 1.4631 1.4710</text>
<text x="992.500" y="89" textLength="27" lengthAdjust="spacingAndGlyphs">1.5250</text>
<text x="992.500" y="153" textLength="27" lengthAdjust="spacingAndGlyphs">1.4140</text>
<text x="992.500" y="185" textLength="27" lengthAdjust="spacingAndGlyphs">1.3600</text>
<text x="992.500" y="217" textLength="27" lengthAdjust="spacingAndGlyphs">1.3045</text>
<text x="992.500" y="249" textLength="27" lengthAdjust="spacingAndGlyphs">1.2490</text>
<text x="992.500" y="281" textLength="27" lengthAdjust="spacingAndGlyphs">1.1935</text>
<text x="992.500" y="313" textLength="27" lengthAdjust="spacingAndGlyphs">1.1380</text>
<text x="992.500" y="345" textLength="27" lengthAdjust="spacingAndGlyphs">1.0840</text>
<text x="992.500" y="377" textLength="27" lengthAdjust="spacingAndGlyphs">1.0285</text>
<text x="992.500" y="409" textLength="27" lengthAdjust="spacingAndGlyphs">0.9730</text>
<text x="992.500" y="441" textLength="27" lengthAdjust="spacingAndGlyphs">0.9175</text>
<text x="992.500" y="473" textLength="27" lengthAdjust="spacingAndGlyphs">0.8620</text>
<text x="992.500" y="505" textLength="27" lengthAdjust="spacingAndGlyphs">0.8080</text>
<text x="990" y="517.500" textLength="32.500" lengthAdjust="spacingAndGlyphs">0.07938</text>
<text x="991" y="603" textLength="16.500" lengthAdjust="spacingAndGlyphs">0.00</text>
<text x="990" y="678.500" textLength="35" lengthAdjust="spacingAndGlyphs">-0.06943</text>
<text x="8.5" y="694" textLength="47.5" lengthAdjust="spacingAndGlyphs">1 Nov 1991</text>
<text x="72.5" y="694" textLength="45.5" lengthAdjust="spacingAndGlyphs">1 Mar 1993</text>
<text x="136.5" y="694" textLength="41.5" lengthAdjust="spacingAndGlyphs">1 Jul 1994</text>
<text x="200.5" y="694" textLength="47.5" lengthAdjust="spacingAndGlyphs">1 Nov 1995</text>
<text x="264.5" y="694" textLength="45.5" lengthAdjust="spacingAndGlyphs">1 Mar 1997</text>
<text x="328.5" y="694" textLength="41.5" lengthAdjust="spacingAndGlyphs">1 Jul 1998</text>
<text x="392.5" y="694" textLength="47.5" lengthAdjust="spacingAndGlyphs">1 Nov 1999</text>
<text x="456.5" y="694" textLength="45.5" lengthAdjust="spacingAndGlyphs">1 Mar 2001</text>
<text x="520.5" y="694" textLength="41.5" lengthAdjust="spacingAndGlyphs">1 Jul 2002</text>
<text x="584.5" y="694" textLength="47.5" lengthAdjust="spacingAndGlyphs">1 Nov 2003</text>
<text x="648.5" y="694" textLength="45.5" lengthAdjust="spacingAndGlyphs">1 Mar 2005</text>
<text x="712.5" y="694" textLength="41.5" lengthAdjust="spacingAndGlyphs">1 Jul 2006</text>
<text x="776.5" y="694" textLength="47.5" lengthAdjust="spacingAndGlyphs">1 Nov 2007</text>
</g>
<rect x="989" y="120" width="34" height="2" fill="#fff"/>
<rect x="989" y="109" width="34" height="11" fill="#f00"/>
<text x="992.500" y="118" font-size="9.6px" fill="#3c3c3c" textLength="27" lengthAdjust="spacingAndGlyphs" shape-rendering="auto">1.4749</text>
</svg>
<!-- tab bar -->
<div style="left:4px;top:701px;width:1024px;height:1px;background:#000"></div>
<div style="left:4px;top:702px;width:85px;height:18px;border-left:1px solid #aca899;"></div>
<div style="left:19px;top:705px;font-size:10px;line-height:12px;color:#777;white-space:pre;font-family:'Liberation Sans',sans-serif" id="tab1">GBPUSD,M5</div>
<div style="left:88px;top:700px;width:105px;height:21px;background:#fff;border:1px solid #000;border-top:none;box-shadow:1px 1px 0 #555"></div>
<div style="left:98px;top:705px;font-size:10px;line-height:12px;color:#000;white-space:pre;font-family:'Liberation Sans',sans-serif" id="tab2">EURUSD,Monthly</div>
<svg width="30" height="12" style="left:998px;top:705px"><path d="M5.500 2.500 L2 6 L5.500 9.500 Z M19 2.500 L22.500 6 L19 9.500 Z" fill="#9c9c9c"/></svg>
<div style="left:4px;top:699px;width:1023px;height:2px;background:#fff"></div>
<!-- status bar -->
<div style="left:4px;top:721px;width:1024px;height:1px;background:#fff"></div>
<div class="st" style="left:8px;font-size:10.8px;font-weight:normal;text-shadow:0.6px 0 0 #000" id="st1">寻求帮助,请按F1键</div>
<div class="st" style="left:162px;font-size:10px" id="st2">Default</div>
<div class="st" style="left:932px;font-size:10px" id="st3">88/1 kb</div>
<div class="sepd" style="left:156px;top:725px;height:16px"></div><div class="sepl" style="left:157px;top:725px;height:16px"></div>
<div class="sepd" style="left:320px;top:725px;height:16px"></div><div class="sepl" style="left:321px;top:725px;height:16px"></div>
<div class="sepd" style="left:436px;top:725px;height:16px"></div><div class="sepl" style="left:437px;top:725px;height:16px"></div>
<div class="sepd" style="left:522px;top:725px;height:16px"></div><div class="sepl" style="left:523px;top:725px;height:16px"></div>
<div class="sepd" style="left:608px;top:725px;height:16px"></div><div class="sepl" style="left:609px;top:725px;height:16px"></div>
<div class="sepd" style="left:694px;top:725px;height:16px"></div><div class="sepl" style="left:695px;top:725px;height:16px"></div>
<div class="sepd" style="left:780px;top:725px;height:16px"></div><div class="sepl" style="left:781px;top:725px;height:16px"></div>
<div class="sepd" style="left:866px;top:725px;height:16px"></div><div class="sepl" style="left:867px;top:725px;height:16px"></div>
<svg width="26" height="13" style="left:872px;top:727px"><g>
<rect x="0" y="0" width="2" height="9" fill="#5f8a1a"/><rect x="0" y="9" width="2" height="3" fill="#0a3f6e"/>
<rect x="3" y="0" width="2" height="8" fill="#5f8a1a"/><rect x="3" y="8" width="2" height="4" fill="#0a3f6e"/>
<rect x="6" y="0" width="2" height="7" fill="#5f8a1a"/><rect x="6" y="7" width="2" height="5" fill="#0a3f6e"/>
<rect x="9" y="0" width="2" height="6" fill="#5f8a1a"/><rect x="9" y="6" width="2" height="6" fill="#0a3f6e"/>
<rect x="12" y="0" width="2" height="5" fill="#5f8a1a"/><rect x="12" y="5" width="2" height="7" fill="#0a3f6e"/>
<rect x="15" y="0" width="2" height="4" fill="#5f8a1a"/><rect x="15" y="4" width="2" height="8" fill="#0a3f6e"/>
<rect x="18" y="0" width="2" height="3" fill="#5f8a1a"/><rect x="18" y="3" width="2" height="9" fill="#0a3f6e"/>
<rect x="21" y="0" width="2" height="2" fill="#5f8a1a"/><rect x="21" y="2" width="2" height="10" fill="#0a3f6e"/>
</g></svg>
<!-- taskbar sliver -->
<div style="left:4px;top:742px;width:1024px;height:4px;background:linear-gradient(to bottom,#3f84ee 0,#2b66dc 2px,#2760d4 4px)"></div>
<div style="left:4px;top:742px;width:94px;height:4px;background:linear-gradient(to bottom,#5aa85a 0,#3f983f 2px,#3a8e3a 4px);border-radius:0 3px 0 0"></div>
<div style="left:10px;top:743px;width:60px;height:3px;background:#7fc07f;border-radius:3px 3px 0 0"></div>
<div style="left:897px;top:742px;width:131px;height:4px;background:linear-gradient(to bottom,#1aa0ee 0,#0c92e6 4px);border-left:1px solid #12408a"></div>

<!-- quote window -->
<div id="qw" style="left:4px;top:456px;width:240px;height:108px;background:#8c8c8c;border-radius:0 7px 0 0;overflow:hidden">
<div style="left:0;top:0;width:240px;height:30px;background:linear-gradient(to bottom,#6e82d8 0,#a2b6ec 1.500px,#8aa2e6 3px,#7a94e0 6px,#7b96e1 14px,#86a4e8 25px,#7f9ae4 29px,#7a90dc 30px)"></div>
<div style="left:0;top:104px;width:240px;height:4px;background:linear-gradient(to bottom,#8da4ea,#6c86d8)"></div>
<div style="left:236px;top:30px;width:4px;height:78px;background:linear-gradient(to right,#8da4ea,#6f89da)"></div>
<svg width="18" height="18" style="left:1px;top:7px" viewBox="0 0 18 18"><defs><radialGradient id="gl" cx="0.35" cy="0.3" r="0.8"><stop offset="0" stop-color="#4aa8ff"/><stop offset="0.5" stop-color="#0a50e0"/><stop offset="1" stop-color="#0a1ea8"/></radialGradient></defs><ellipse cx="9.500" cy="10" rx="6.800" ry="6.500" fill="#4a4a4a" transform="rotate(-35 9 9)"/><ellipse cx="8.500" cy="9" rx="6.600" ry="6.200" fill="url(#gl)" transform="rotate(-35 8.500 9)"/><path d="M3.500 5.500 q2 -3 5.500 -3.500 q-1 2.500 -3 3 q-1 2 -2.500 0.500z" fill="#5ab85a"/><path d="M11 3 q3 1 3.500 4.500 q0 3 -1.500 4 q-2 -1 -1.500 -3.500 q-1 -2 -0.500 -5z" fill="#1a8a1a"/><path d="M6.500 9 q2 0 2.500 1.500 q-0.500 2 -2 3 q-1 -2 -0.500 -4.500z" fill="#2a9a2a"/><path d="M4.500 6 l5 -3.500" stroke="#e8f4ff" stroke-width="1.600" stroke-linecap="round" fill="none"/><path d="M1.500 13.500 q-1 1.500 0.500 2 q2 0 3.500 -1" stroke="#3aa0f0" stroke-width="1" fill="none"/><path d="M11 1.500 q3 -1 4 0.500" stroke="#3aa0f0" stroke-width="1" fill="none"/></svg>
<div id="qt" style="left:21px;top:8px;font-size:12.5px;line-height:16px;height:16px;color:#e6ecfb;font-weight:bold;white-space:pre;font-family:'Noto Sans CJK SC','Liberation Sans',sans-serif;text-shadow:1px 1px 1px #4a60a8">牌价表</div>
<div style="left:214px;top:7px;width:20px;height:19px;background:#8a8a8a;border:1px solid #b8b8c0;border-radius:3px"><svg width="18" height="17" style="left:0;top:0"><path d="M4.500 4 L13.500 13 M13.500 4 L4.500 13" stroke="#fff" stroke-width="2" fill="none"/></svg></div>
<!-- left column -->
<div style="left:0;top:30px;width:21px;height:17px;background:#ffff00;overflow:hidden"><span style="left:11px;top:2px;font-size:12px;line-height:14px;color:#7a5c00;white-space:pre">帐</span></div>
<div style="left:0;top:47px;width:21px;height:19px;background:#26408b;overflow:hidden"><span style="left:2px;top:4px;font-size:10.5px;line-height:12px;color:#ffee00;white-space:pre;letter-spacing:-0.3px" id="fx3">FX3</span></div>
<div style="left:2px;top:73px;width:19px;height:19px;background:#ffff00;border:1px solid #5a5a20"><span style="left:4px;top:2px;font-family:'Liberation Serif',serif;font-size:12px;line-height:13px;color:#3a3a3a;font-weight:normal">E</span></div>
<!-- table: GBP -->
<div class="qc wb" style="left:26px;top:31px;width:105px;height:17px"></div>
<div class="qc wb" style="left:26px;top:47px;width:53px;height:20px"></div>
<div class="qc wb" style="left:78px;top:47px;width:53px;height:20px"></div>
<div class="qc wb" style="left:26px;top:66px;width:105px;height:18px"></div>
<div class="qc wb" style="left:26px;top:83px;width:53px;height:19px"></div>
<div class="qc wb" style="left:78px;top:83px;width:53px;height:19px"></div>
<!-- table: EUR -->
<div class="qc gb" style="left:131px;top:31px;width:105px;height:17px"></div>
<div class="qc gb" style="left:131px;top:47px;width:53px;height:20px"></div>
<div class="qc gb" style="left:183px;top:47px;width:53px;height:20px"></div>
<div class="qc gb" style="left:131px;top:66px;width:105px;height:18px"></div>
<div class="qc gb" style="left:131px;top:83px;width:53px;height:19px"></div>
<div class="qc gb" style="left:183px;top:83px;width:53px;height:19px"></div>
<svg width="240" height="108" style="left:0;top:0"><g fill="#40ff00"><path d="M30 43 L34.500 34 L39 43 Z"/><path d="M30 79 L34.500 70 L39 79 Z"/><path d="M135 43 L139.500 34 L144 43 Z"/><path d="M135 79 L139.500 70 L144 79 Z"/></g></svg>
<span class="qh" style="left:53px;top:33px">GBP/USD</span>
<span class="qh" style="left:53px;top:69px">GBP/USD</span>
<span class="qh" style="left:158px;top:33px">EUR/USD</span>
<span class="qh" style="left:158px;top:69px">EUR/USD</span>
<span class="qp" style="left:34px;top:51px">1<i>.</i>9693</span><span class="qp" style="left:86px;top:51px">1<i>.</i>9698</span>
<span class="qp" style="left:34px;top:87px">1<i>.</i>9693</span><span class="qp" style="left:86px;top:87px">1<i>.</i>9698</span>
<span class="qp g" style="left:139px;top:51px">1<i>.</i>4710</span><span class="qp g" style="left:191px;top:51px">1<i>.</i>4713</span>
<span class="qp g" style="left:139px;top:87px">1<i>.</i>4710</span><span class="qp g" style="left:191px;top:87px">1<i>.</i>4713</span>
</div>

</body></html>
